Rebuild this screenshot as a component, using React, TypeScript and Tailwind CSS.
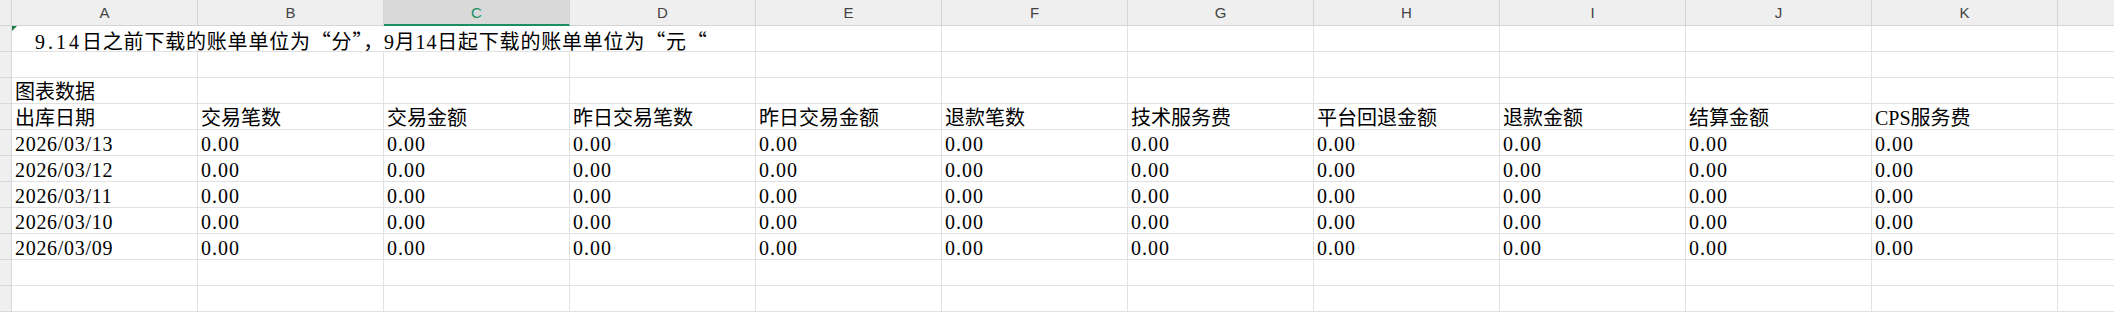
import React from "react";

const COLS = ["A", "B", "C", "D", "E", "F", "G", "H", "I", "J", "K"];

const HEADERS = [
  "出库日期",
  "交易笔数",
  "交易金额",
  "昨日交易笔数",
  "昨日交易金额",
  "退款笔数",
  "技术服务费",
  "平台回退金额",
  "退款金额",
  "结算金额",
  "CPS服务费",
];

const DATES = ["2026/03/13", "2026/03/12", "2026/03/11", "2026/03/10", "2026/03/09"];

const cellFont =
  "font-['Liberation_Serif','Noto_Sans_CJK_SC',serif] text-[20px] leading-[25px] text-black";

function RowHead() {
  return <div className="h-[26px] border-b border-r border-[#d8d8d8] bg-[#efefef]" />;
}

function Cell(props: { children?: React.ReactNode; span?: boolean }) {
  return (
    <div
      className={
        "relative h-[26px] whitespace-nowrap border-b border-r border-[#e1e1e1] pl-[3px] pt-[2px] " +
        cellFont +
        (props.span ? " col-span-4" : " overflow-hidden")
      }
    >
      {props.children}
    </div>
  );
}

function Tail() {
  return <div className="h-[26px] border-b border-[#e1e1e1]" />;
}

function Row(props: { cells?: React.ReactNode[] }) {
  return (
    <>
      <RowHead />
      {COLS.map((c, i) => (
        <Cell key={c}>{props.cells?.[i]}</Cell>
      ))}
      <Tail />
    </>
  );
}

const cjk = "font-['Noto_Sans_CJK_SC',sans-serif]";

const zero = <span className="tracking-[1px]">0.00</span>;

export default function App() {
  return (
    <div className="h-[313px] w-[2114px] overflow-hidden bg-white">
      <div className="grid grid-cols-[12px_repeat(11,186px)_1fr]">
        {/* column headers */}
        <div className="h-[26px] border-b border-r border-[#d4d4d4] bg-[#efefef]" />
        {COLS.map((c) =>
          c === "C" ? (
            <div
              key={c}
              className="flex h-[26px] items-center justify-center border-r border-b-2 border-r-[#d4d4d4] border-b-[#1a8f62] bg-[#d9d9d9] pt-[2px] font-['Liberation_Sans',sans-serif] text-[15px] text-[#1a8f62]"
            >
              {c}
            </div>
          ) : (
            <div
              key={c}
              className="flex h-[26px] items-center justify-center border-b border-r border-[#d4d4d4] bg-[#efefef] pt-[2px] font-['Liberation_Sans',sans-serif] text-[15px] text-[#444]"
            >
              {c}
            </div>
          ),
        )}
        <div className="h-[26px] border-b border-[#d4d4d4] bg-[#efefef]" />

        {/* row 1: merged note */}
        <RowHead />
        <Cell span>
          <span className="absolute left-0 top-0 h-0 w-0 border-r-[5px] border-t-[5px] border-r-transparent border-t-[#1e7a45]" />
          <span className="pl-[20px] tracking-[0.8px]">
            <span className="tracking-[3px]">9.14</span>日之前下载的账单单位为
            <span className={cjk}>“分”，</span>9月14日起下载的账单单位为
            <span className={cjk}>“元“</span>
          </span>
        </Cell>
        {COLS.slice(4).map((c) => (
          <Cell key={c} />
        ))}
        <Tail />

        <Row />
        <Row cells={["图表数据"]} />
        <Row cells={HEADERS} />
        {DATES.map((d) => (
          <Row
            key={d}
            cells={[<span className="tracking-[0.7px]">{d}</span>, ...Array(10).fill(zero)]}
          />
        ))}
        <Row />
        <Row />
      </div>
    </div>
  );
}
